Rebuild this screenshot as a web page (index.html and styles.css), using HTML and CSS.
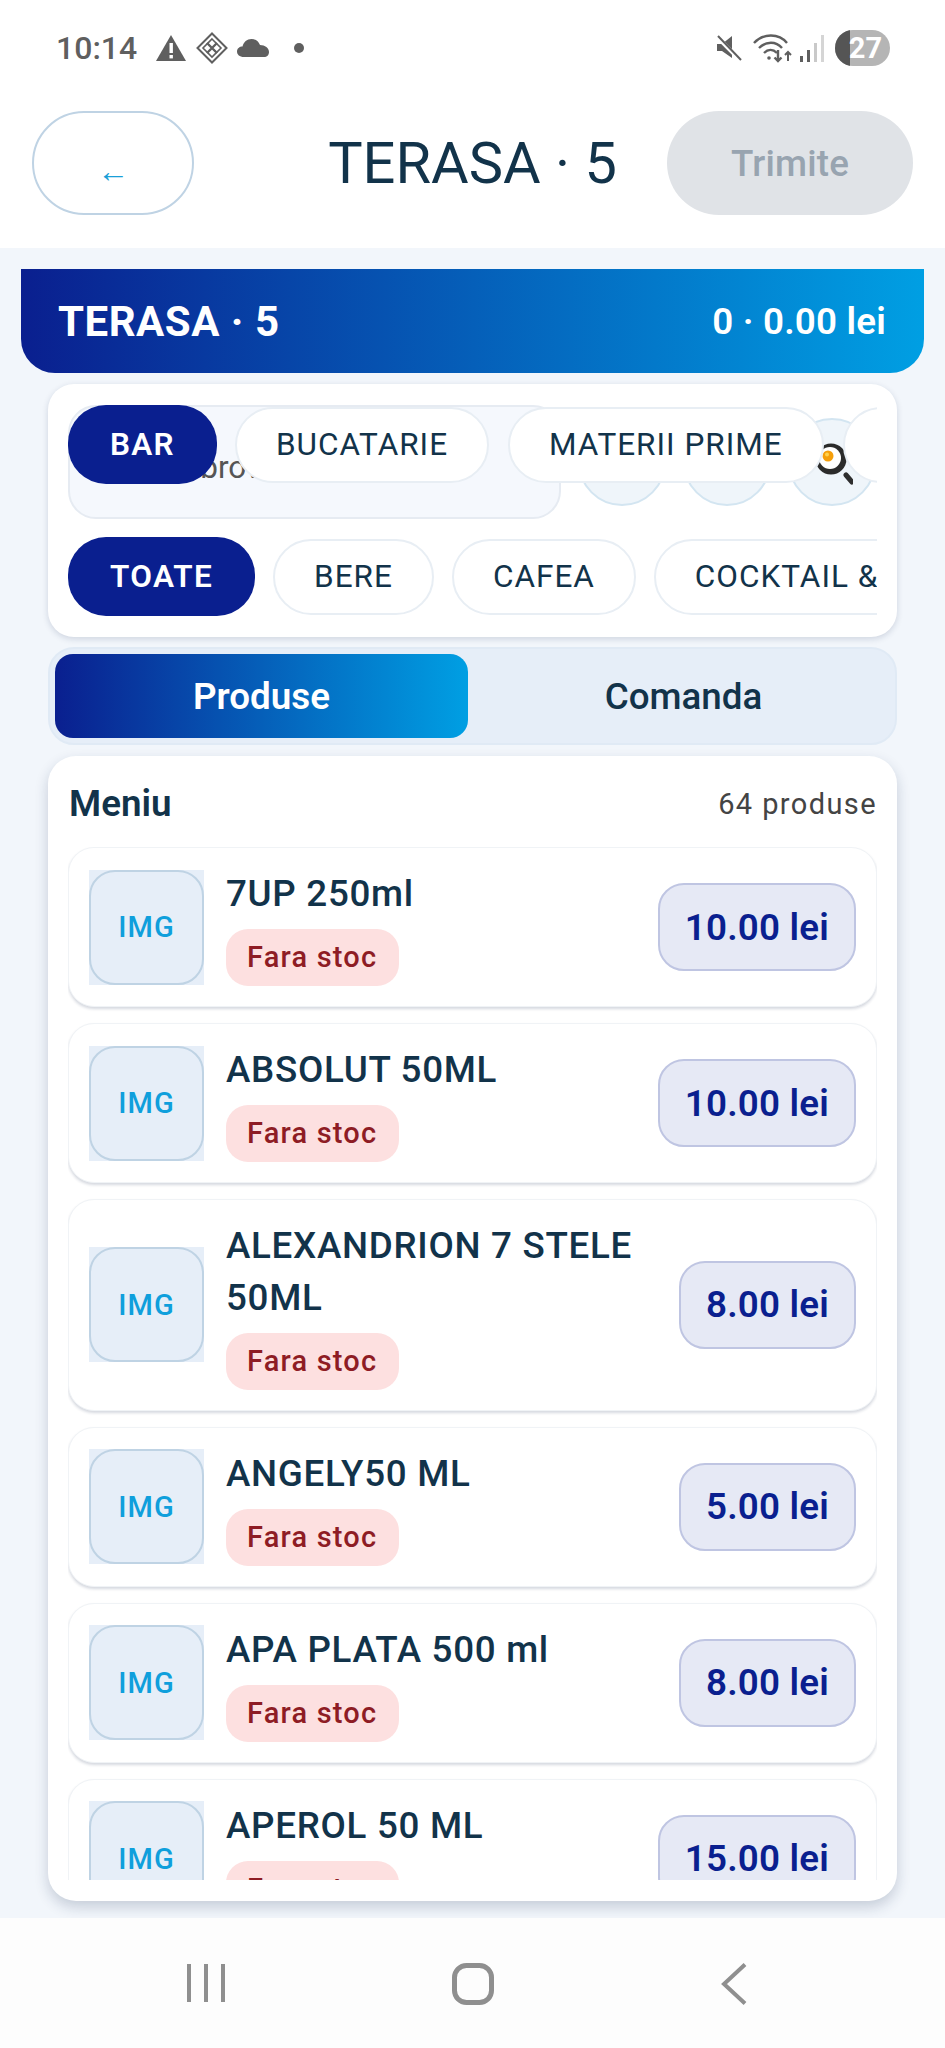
FILE: index.html
```html
<!DOCTYPE html>
<html lang="ro">
<head>
    <meta charset="UTF-8">
    <meta name="viewport" content="width=device-width, initial-scale=1.0">
    <title>TERASA 5</title>
    <link rel="stylesheet" href="styles.css">
</head>
<body>
    <div class="phone">
        <div class="status-bar">
            <div class="status-left">
                <span class="status-time">10:14</span>
                <svg class="icon-warn" viewBox="0 0 32 28"><path d="M16 1 L31 27 H1 Z" fill="#5f5f5f"/><rect x="14.5" y="9" width="3.4" height="10" fill="#fff"/><rect x="14.5" y="21" width="3.4" height="3.4" fill="#fff"/></svg>
                <svg class="icon-diamond" viewBox="0 0 32 32" fill="none" stroke="#5f5f5f"><path d="M16 1.5 L30.5 16 L16 30.5 L1.5 16 Z" stroke-width="2"/><path d="M16 7 L25 16 L16 25 L7 16 Z" stroke-width="1.6"/><path d="M11 11 L21 21 M21 11 L11 21" stroke-width="2.4"/></svg>
                <svg class="icon-cloud" viewBox="0 0 32 18"><path d="M7 18 C2.500 18 0 15.500 0 12.500 C0 9.500 2.500 7.500 5.500 7.500 C6.500 3 10 0 14.500 0 C18.500 0 21.500 2.500 23 6 C28 6 32 9 32 13 C32 16 30 18 27 18 Z" fill="#5f5f5f"/></svg>
                <span class="status-dot"></span>
            </div>
            <div class="status-right">
                <svg class="icon-mute" viewBox="0 0 26 28"><path d="M1 10 H6 L16 2 V24 L6 17 H1 Z" fill="#5f5f5f"/><path d="M1 3 L25 27" stroke="#fff" stroke-width="4"/><path d="M2 2 L25 26" stroke="#5f5f5f" stroke-width="2"/></svg>
                <svg class="icon-wifi" viewBox="0 0 40 30" fill="none" stroke="#5f5f5f" stroke-width="2.400"><path d="M1 10 C10 0 26 0 34 10"/><path d="M6 15 C13 8 23 8 29 15"/><path d="M11 20 C15 16 20 16 24 20"/><circle cx="16" cy="25" r="1.800" fill="#5f5f5f" stroke="none"/><path d="M25 17 V28 M21.500 24.500 L25 28 L28.500 24.500"/><path d="M35 28 V19 M32 22 L35 19 L38 22" stroke-width="2"/></svg>
                <svg class="icon-signal" viewBox="0 0 24 28"><rect x="0" y="22" width="3" height="6" fill="#5f5f5f"/><rect x="7" y="16" width="3" height="12" fill="#5f5f5f"/><rect x="14" y="9" width="3" height="19" fill="#c9c9c9"/><rect x="21" y="1" width="3" height="27" fill="#d5d5d5"/></svg>
                <div class="battery"><span class="battery-fill"></span><span class="battery-text">27</span></div>
            </div>
        </div>

        <header class="top-bar">
            <button class="back-button" aria-label="Inapoi">←</button>
            <h1 class="top-title">TERASA · 5</h1>
            <button class="send-button" disabled>Trimite</button>
        </header>

        <main class="content">
            <section class="hero">
                <span class="hero-title">TERASA · 5</span>
                <span class="hero-total">0 · 0.00 lei</span>
            </section>

            <section class="filters">
                <div class="search-row">
                    <div class="search-box">Cauta brownie</div>
                    <div class="round-button"></div>
                    <div class="round-button"></div>
                    <div class="round-button">
                        <svg class="pan" viewBox="0 0 36 46">
                            <path d="M29 35 L35 42" stroke="#2e2e2e" stroke-width="5" stroke-linecap="round"/>
                            <circle cx="14" cy="19" r="15.500" fill="#2b2b2b"/>
                            <circle cx="13" cy="18" r="11" fill="#fff"/>
                            <circle cx="11" cy="16" r="5.500" fill="#f59f0b"/>
                            <circle cx="10" cy="14.500" r="2" fill="#ffd24d"/>
                        </svg>
                    </div>
                </div>
                <div class="pill-row">
                    <button class="pill active">TOATE</button>
                    <button class="pill">BERE</button>
                    <button class="pill">CAFEA</button>
                    <button class="pill">COCKTAIL &amp; LONG DRINK</button>
                </div>
                <div class="pill-row category-row">
                    <button class="pill active">BAR</button>
                    <button class="pill">BUCATARIE</button>
                    <button class="pill">MATERII PRIME</button>
                    <button class="pill">DESERTURI</button>
                </div>
            </section>

            <section class="tabs">
                <button class="tab active">Produse</button>
                <button class="tab">Comanda</button>
            </section>

            <section class="menu">
                <div class="menu-head">
                    <h2>Meniu</h2>
                    <span class="menu-count">64 produse</span>
                </div>
                <div class="menu-list">
                    <article class="product">
                        <div class="product-img"><span>IMG</span></div>
                        <div class="product-info"><div class="product-name">7UP 250ml</div><span class="badge">Fara stoc</span></div>
                        <div class="price">10.00 lei</div>
                    </article>
                    <article class="product">
                        <div class="product-img"><span>IMG</span></div>
                        <div class="product-info"><div class="product-name">ABSOLUT 50ML</div><span class="badge">Fara stoc</span></div>
                        <div class="price">10.00 lei</div>
                    </article>
                    <article class="product">
                        <div class="product-img"><span>IMG</span></div>
                        <div class="product-info"><div class="product-name">ALEXANDRION 7 STELE 50ML</div><span class="badge">Fara stoc</span></div>
                        <div class="price">8.00 lei</div>
                    </article>
                    <article class="product">
                        <div class="product-img"><span>IMG</span></div>
                        <div class="product-info"><div class="product-name">ANGELY50 ML</div><span class="badge">Fara stoc</span></div>
                        <div class="price">5.00 lei</div>
                    </article>
                    <article class="product">
                        <div class="product-img"><span>IMG</span></div>
                        <div class="product-info"><div class="product-name">APA PLATA 500 ml</div><span class="badge">Fara stoc</span></div>
                        <div class="price">8.00 lei</div>
                    </article>
                    <article class="product">
                        <div class="product-img"><span>IMG</span></div>
                        <div class="product-info"><div class="product-name">APEROL 50 ML</div><span class="badge">Fara stoc</span></div>
                        <div class="price">15.00 lei</div>
                    </article>
                </div>
            </section>
        </main>

        <nav class="nav-bar">
            <svg class="nav-recent" viewBox="0 0 38 40"><path d="M2 1 V39 M19 1 V39 M36 1 V39" stroke="#8f8f8f" stroke-width="4" fill="none"/></svg>
            <svg class="nav-home" viewBox="0 0 42 42"><rect x="2.500" y="2.500" width="37" height="37" rx="12" stroke="#8f8f8f" stroke-width="5" fill="none"/></svg>
            <svg class="nav-back" viewBox="0 0 26 42"><path d="M24 1.500 L3 21 L24 40.500" stroke="#8f8f8f" stroke-width="4" fill="none"/></svg>
        </nav>
    </div>
</body>
</html>
```

FILE: styles.css
```css
* {
    margin: 0;
    padding: 0;
    box-sizing: border-box;
    font-family: Roboto, 'Liberation Sans', sans-serif;
}

body {
    background: #fff;
}

button {
    border: none;
    background: none;
}

.phone {
    width: 945px;
    height: 2048px;
    display: flex;
    flex-direction: column;
    overflow: hidden;
}

/* Status bar */
.status-bar {
    height: 70px;
    padding: 26px 55px 0 56px;
    display: flex;
    justify-content: space-between;
    align-items: flex-start;
    background: #fff;
}

.status-left,
.status-right {
    display: flex;
    align-items: center;
    height: 44px;
}

.status-time {
    font-size: 32px;
    font-weight: 500;
    color: #5f5f5f;
    width: 99px;
}

.icon-warn {
    width: 32px;
    height: 28px;
    margin-right: 9px;
}

.icon-diamond {
    width: 32px;
    height: 32px;
    margin-right: 9px;
}

.icon-cloud {
    width: 32px;
    height: 18px;
    margin-right: 25px;
}

.status-dot {
    width: 10px;
    height: 10px;
    border-radius: 50%;
    background: #5f5f5f;
}

.icon-mute {
    width: 26px;
    height: 28px;
    margin-right: 11px;
}

.icon-wifi {
    width: 40px;
    height: 30px;
    margin-right: 7px;
}

.icon-signal {
    width: 24px;
    height: 28px;
    margin-right: 11px;
}

.battery {
    position: relative;
    width: 55px;
    height: 36px;
    border-radius: 18px;
    background: #b5b5b5;
    overflow: hidden;
    display: flex;
    align-items: center;
    justify-content: center;
}

.battery-fill {
    position: absolute;
    left: 0;
    top: 0;
    bottom: 0;
    width: 15px;
    background: #555;
}

.battery-text {
    position: relative;
    font-size: 29px;
    font-weight: 700;
    color: #fff;
    margin-left: 6px;
}

/* Top bar */
.top-bar {
    height: 178px;
    padding: 41px 32px 33px;
    display: flex;
    align-items: center;
    justify-content: space-between;
    background: #fff;
}

.back-button {
    width: 162px;
    height: 104px;
    border: 2px solid #bfd3e4;
    border-radius: 52px;
    font-size: 32px;
    color: #1a9fd8;
    padding-top: 16px;
}

.top-title {
    font-size: 57.75px;
    font-weight: 400;
    color: #12334a;
    margin-left: 84px;
}

.send-button {
    width: 246px;
    height: 104px;
    border-radius: 52px;
    background: #e0e3e7;
    font-size: 36.75px;
    font-weight: 500;
    letter-spacing: 0.2px;
    color: #98a4b0;
}

/* Main area */
.content {
    flex: 1;
    min-height: 0;
    padding: 21px 48px 17px;
    display: flex;
    flex-direction: column;
    background: #f2f6fb;
}

.hero {
    height: 104px;
    margin: 0 -27px 11px;
    padding: 0 38px 0 37px;
    border-radius: 0 0 34px 34px;
    display: flex;
    justify-content: space-between;
    align-items: center;
    background: linear-gradient(90deg, #0a1f8f, #009fe3);
    color: #fff;
}

.hero-title {
    font-size: 42px;
    font-weight: 700;
    letter-spacing: 0.5px;
}

.hero-total {
    font-size: 36.75px;
    font-weight: 600;
    letter-spacing: 0.2px;
}

/* Filter card */
.filters {
    position: relative;
    height: 253px;
    padding: 21px 20px;
    margin-bottom: 10px;
    border-radius: 26px;
    background: #fff;
    box-shadow: 0 2px 6px rgba(20, 40, 80, 0.16);
    display: flex;
    flex-direction: column;
    gap: 18px;
}

.search-row {
    height: 114px;
    display: flex;
    align-items: center;
    gap: 17px;
    overflow: hidden;
    flex-shrink: 0;
}

.search-box {
    width: 493px;
    height: 114px;
    flex-shrink: 0;
    padding: 10px 0 0 40px;
    border: 2px solid #e6ebf2;
    border-radius: 28px;
    background: #f5f8fd;
    display: flex;
    align-items: center;
    font-size: 31.5px;
    color: #555;
    white-space: nowrap;
    overflow: hidden;
}

.round-button {
    position: relative;
    width: 88px;
    height: 88px;
    flex-shrink: 0;
    border: 2px solid #d3e5f1;
    border-radius: 50%;
    background: #eff5fa;
}

.pan {
    position: absolute;
    left: 27px;
    top: 20px;
    width: 36px;
    height: 46px;
}

.pill-row {
    display: flex;
    align-items: center;
    gap: 18px;
    height: 79px;
    overflow: hidden;
    flex-shrink: 0;
}

.category-row {
    position: absolute;
    top: 21px;
    left: 20px;
    right: 20px;
    gap: 19px;
}

.category-row .pill.active {
    margin-right: -1px;
}

.pill {
    height: 76px;
    flex-shrink: 0;
    padding: 0 39px;
    border: 2px solid #e8eef4;
    border-radius: 38px;
    background: #fff;
    font-size: 31.5px;
    letter-spacing: 1px;
    color: #12334a;
    white-space: nowrap;
}

.pill.active {
    height: 79px;
    border: none;
    padding: 0 42px;
    background: #0a1f8f;
    color: #fff;
    font-weight: 600;
    letter-spacing: 1.3px;
}

/* Tabs */
.tabs {
    height: 98px;
    padding: 5px;
    margin-bottom: 11px;
    border: 2px solid #e0eaf5;
    border-radius: 26px;
    background: #e6eef8;
    display: grid;
    grid-template-columns: 1fr 1fr;
    gap: 9px;
    flex-shrink: 0;
}

.tab {
    border-radius: 18px;
    font-size: 36.75px;
    font-weight: 500;
    color: #12334a;
}

.tab.active {
    background: linear-gradient(90deg, #0a1f8f, #009fe3);
    color: #fff;
    font-weight: 600;
}

/* Menu */
.menu {
    flex: 1;
    min-height: 0;
    padding: 0 20px 21px;
    border-radius: 28px;
    background: #fff;
    box-shadow: 0 6px 14px rgba(20, 40, 80, 0.2);
    display: flex;
    flex-direction: column;
}

.menu-head {
    height: 91px;
    flex-shrink: 0;
    padding: 4px 0 0 1px;
    display: flex;
    justify-content: space-between;
    align-items: center;
}

.menu-head h2 {
    font-size: 36.75px;
    font-weight: 600;
    color: #12334a;
}

.menu-count {
    font-size: 29px;
    letter-spacing: 1.4px;
    color: #444;
}

.menu-list {
    flex: 1;
    min-height: 0;
    overflow: hidden;
    display: flex;
    flex-direction: column;
    gap: 16px;
}

.product {
    flex-shrink: 0;
    padding: 20px;
    border: 1px solid #f0f3f6;
    border-radius: 26px;
    background: #fff;
    box-shadow: 0 2px 3px rgba(20, 40, 80, 0.18);
    display: flex;
    align-items: center;
    gap: 22px;
}

.product-img {
    width: 115px;
    height: 115px;
    flex-shrink: 0;
    background: #e6eef8;
}

.product-img span {
    width: 100%;
    height: 100%;
    border: 2px solid #bfd3e4;
    border-radius: 26px;
    background: #e6eef8;
    display: flex;
    justify-content: center;
    align-items: center;
    font-size: 29px;
    font-weight: 500;
    letter-spacing: 1px;
    color: #0f9fdc;
}

.product-info {
    flex: 1;
    min-width: 0;
}

.product-name {
    font-size: 36.75px;
    font-weight: 500;
    line-height: 51.5px;
    letter-spacing: 0.7px;
    color: #12334a;
    margin-bottom: 9.5px;
}

.badge {
    display: inline-block;
    height: 57px;
    padding: 0 22px 0 21px;
    border-radius: 22px;
    background: #fde0e0;
    font-size: 29px;
    font-weight: 500;
    line-height: 57px;
    letter-spacing: 1.2px;
    color: #8e1c24;
}

.price {
    height: 88px;
    flex-shrink: 0;
    padding: 0 25px;
    border: 2px solid #bfc5e2;
    border-radius: 26px;
    background: #e6e9f5;
    display: flex;
    align-items: center;
    font-size: 36.75px;
    font-weight: 600;
    letter-spacing: 0.2px;
    color: #0a1f8f;
}

/* Navigation */
.nav-bar {
    height: 130px;
    flex-shrink: 0;
    padding: 45px 198px 45px 187px;
    display: flex;
    justify-content: space-between;
    align-items: flex-start;
    background: #fdfdfd;
}

.nav-recent {
    width: 38px;
    height: 40px;
}

.nav-home {
    width: 42px;
    height: 42px;
}

.nav-back {
    width: 26px;
    height: 42px;
}
```
